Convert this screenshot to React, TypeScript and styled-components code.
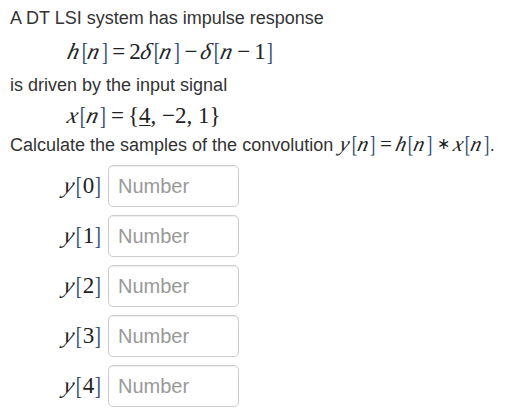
import React from "react";
import styled, { createGlobalStyle } from "styled-components";

const Global = createGlobalStyle`
  html, body { margin: 0; padding: 0; background: #fff; }
  body { font-family: "Liberation Sans", Arial, sans-serif; font-size: 18px; color: #333; }
`;

const Page = styled.div`
  padding: 5px 10px 0 10px;
  display: flex;
  flex-direction: column;
`;

const Para = styled.p`
  margin: 0;
  line-height: 26px;
  font-size: 18px;
  white-space: nowrap;
`;

const MathBlock = styled.div<{ h: number }>`
  padding-left: 58px;
  height: ${(p) => p.h}px;
  display: flex;
  align-items: center;
`;

const M = styled.span<{ $size?: number; $lead?: number }>`
  font-family: "Liberation Serif", "Times New Roman", serif;
  font-size: ${(p) => p.$size ?? 23}px;
  color: #222;
  white-space: nowrap;
  line-height: 1;
  margin-left: ${(p) => p.$lead ?? 0}px;
`;

const V = styled.span`
  display: inline-block;
  font-family: "Liberation Serif", "Times New Roman", serif;
  font-style: italic;
  transform: skewX(-13deg);
  padding-right: 1px;
`;

const Br = styled.span`
  display: inline-block;
  transform: scale(0.8, 1.12);
  color: #2c4a6b;
`;

const Op = styled.span<{ $pad?: number }>`
  padding: 0 ${(p) => p.$pad ?? 4}px;
`;

const Star = styled.span`
  display: inline-block;
  font-size: 0.75em;
  padding: 0 4px;
  vertical-align: 2px;
`;

const U = styled.span`
  text-decoration: underline;
  text-decoration-thickness: 1px;
  text-underline-offset: 2px;
`;

const Rows = styled.div`
  display: flex;
  flex-direction: column;
  gap: 8px;
  padding-left: 36px;
  margin-top: 7px;
`;

const Row = styled.div`
  display: flex;
  align-items: center;
  gap: 6px;
`;

const Label = styled.span`
  width: 56px;
  text-align: right;
`;

const Input = styled.input`
  box-sizing: border-box;
  width: 131px;
  height: 42px;
  border: 1px solid #ccc;
  border-radius: 5px;
  padding: 0 9px;
  font-family: "Liberation Sans", Arial, sans-serif;
  font-size: 20px;
  color: #555;
  box-shadow: inset 0 1px 1px rgba(0,0,0,.075);
  &::placeholder { color: #999; }
`;

const Idx = ({ v, i }: { v: string; i: React.ReactNode }) => (
  <>
    {v && <V>{v}</V>}
    <Br>[</Br>
    {i}
    <Br>]</Br>
  </>
);

export default function App() {
  return (
    <Page>
      <Global />
      <Para>A DT LSI system has impulse response</Para>
      <MathBlock h={41}>
        <M>
          <Idx v="h" i={<V>n</V>} />
          <Op>=</Op>2<V>δ</V>
          <Idx v="" i={<V>n</V>} />
          <Op>−</Op>
          <V>δ</V>
          <Idx v="" i={<><V>n</V><Op>−</Op>1</>} />
        </M>
      </MathBlock>
      <Para>is driven by the input signal</Para>
      <MathBlock h={34}>
        <M>
          <Idx v="x" i={<V>n</V>} />
          <Op>=</Op>
          {"{"}
          <U>4</U>, −2, 1{"}"}
        </M>
      </MathBlock>
      <Para>
        Calculate the samples of the convolution
        <M $size={21} $lead={7}>
          <Idx v="y" i={<V>n</V>} />
          <Op $pad={4}>=</Op>
          <Idx v="h" i={<V>n</V>} />
          <Star>∗</Star>
          <Idx v="x" i={<V>n</V>} />
        </M>
        .
      </Para>
      <Rows>
        {[0, 1, 2, 3, 4].map((k) => (
          <Row key={k}>
            <Label>
              <M>
                <Idx v="y" i={String(k)} />
              </M>
            </Label>
            <Input placeholder="Number" />
          </Row>
        ))}
      </Rows>
    </Page>
  );
}
